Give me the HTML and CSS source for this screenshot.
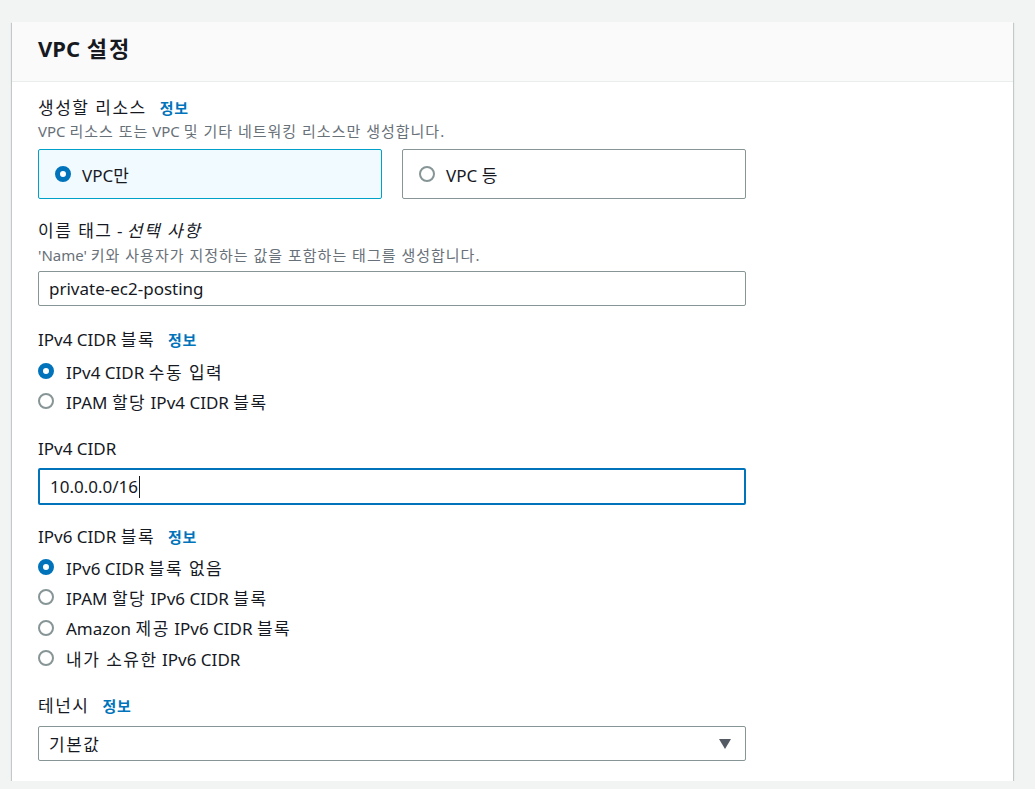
FILE: index.html
```html
<!DOCTYPE html>
<html lang="ko">
<head>
<meta charset="utf-8">
<title>VPC 설정</title>
<link rel="stylesheet" href="styles.css">
</head>
<body>
<div class="card">
  <div class="card-header">
    <h2 class="title">VPC <span class="k">설정</span></h2>
  </div>
  <div class="card-body">
    <div class="field field-resource">
      <div class="label"><span class="k">생성할 리소스</span><a class="info">정보</a></div>
      <div class="desc">VPC <span class="k">리소스 또는</span> VPC <span class="k">및 기타 네트워킹 리소스만 생성합니다</span>.</div>
      <div class="tiles">
        <div class="tile tile-selected"><span class="radio radio-on"></span><span class="tile-text">VPC<span class="k">만</span></span></div>
        <div class="tile"><span class="radio"></span><span class="tile-text">VPC <span class="k">등</span></span></div>
      </div>
    </div>

    <div class="field field-name">
      <div class="label"><span class="k">이름 태그</span> - <i class="k">선택 사항</i></div>
      <div class="desc">'Name' <span class="k">키와 사용자가 지정하는 값을 포함하는 태그를 생성합니다</span>.</div>
      <div class="input">private-ec2-posting</div>
    </div>

    <div class="field field-v4block">
      <div class="label">IPv4 CIDR <span class="k">블록</span><a class="info">정보</a></div>
      <div class="radios">
        <div class="radio-row"><span class="radio radio-on"></span><span>IPv4 CIDR <span class="k">수동 입력</span></span></div>
        <div class="radio-row"><span class="radio"></span><span>IPAM <span class="k">할당</span> IPv4 CIDR <span class="k">블록</span></span></div>
      </div>
    </div>

    <div class="field field-v4cidr">
      <div class="label">IPv4 CIDR</div>
      <div class="input input-focus">10.0.0.0/16<span class="caret"></span></div>
    </div>

    <div class="field field-v6block">
      <div class="label">IPv6 CIDR <span class="k">블록</span><a class="info">정보</a></div>
      <div class="radios">
        <div class="radio-row"><span class="radio radio-on"></span><span>IPv6 CIDR <span class="k">블록 없음</span></span></div>
        <div class="radio-row"><span class="radio"></span><span>IPAM <span class="k">할당</span> IPv6 CIDR <span class="k">블록</span></span></div>
        <div class="radio-row"><span class="radio"></span><span>Amazon <span class="k">제공</span> IPv6 CIDR <span class="k">블록</span></span></div>
        <div class="radio-row"><span class="radio"></span><span><span class="k">내가 소유한</span> IPv6 CIDR</span></div>
      </div>
    </div>

    <div class="field field-tenancy">
      <div class="label"><span class="k">테넌시</span><a class="info">정보</a></div>
      <div class="input select"><span class="k">기본값</span>
        <svg class="select-caret" width="12" height="10" viewBox="0 0 12 10"><path d="M0 0 H12 L6 10 Z" fill="#545b64"/></svg>
      </div>
    </div>
  </div>
</div>
</body>
</html>
```

FILE: styles.css
```css
* { box-sizing: border-box; }

html, body {
  margin: 0;
  padding: 0;
}

body {
  background: #f2f3f3;
  font-family: "Noto Sans", "Noto Sans CJK KR", sans-serif;
  color: #16191f;
  font-size: 17px;
  padding-top: 22px;
  padding-left: 12px;
}

.k {
  letter-spacing: 1.5px;
}

.card {
  width: 1001px;
  background: #ffffff;
  box-shadow: 0 1px 1px 0 rgba(0, 28, 36, 0.3), 1px 1px 1px 0 rgba(0, 28, 36, 0.15), -1px 1px 1px 0 rgba(0, 28, 36, 0.15);
}

.card-header {
  height: 60px;
  background: #fafafa;
  border-bottom: 1px solid #eaeded;
  padding: 11px 26px 0;
}

.title {
  margin: 0;
  font-size: 22px;
  font-weight: 700;
  line-height: 30px;
  color: #16191f;
  word-spacing: 1px;
}

.title .k {
  letter-spacing: 2px;
}

.card-body {
  padding: 14px 26px 20px;
}

.field {
  width: 708px;
}

.label {
  font-size: 17px;
  line-height: 24px;
  color: #16191f;
}

.label i {
  font-style: italic;
}

.info {
  color: #0073bb;
  font-size: 15px;
  font-weight: 700;
  margin-left: 13px;
  letter-spacing: 0.7px;
}

.desc {
  font-size: 15px;
  line-height: 20px;
  color: #687078;
  margin-top: 1px;
}

.desc .k {
  letter-spacing: 1px;
}

.tiles {
  display: flex;
  gap: 20px;
  margin-top: 8px;
}

.tile {
  flex: 1;
  height: 50px;
  border: 1px solid #879596;
  border-radius: 2px;
  display: flex;
  align-items: center;
  padding-left: 16px;
  gap: 11px;
  font-size: 17px;
}

.tile-selected {
  background: #f1faff;
  border-color: #00a1c9;
}

.radio {
  display: inline-block;
  width: 16px;
  height: 16px;
  border-radius: 50%;
  border: 2px solid #879596;
  background: #fff;
  flex: none;
}

.radio-on {
  border: 5px solid #0073bb;
}

.field-name { margin-top: 20px; }

.field-name .desc { margin-top: 2px; }

.input {
  margin-top: 6px;
  height: 35px;
  border: 1px solid #879596;
  border-radius: 2px;
  display: flex;
  align-items: center;
  padding-left: 10px;
  font-size: 17px;
  color: #16191f;
}

.input-focus {
  border: 2px solid #0073bb;
  height: 37px;
  margin-top: 7px;
}

.caret {
  display: inline-block;
  width: 1px;
  height: 22px;
  background: #16191f;
  margin-left: 1px;
}

.field-v4block { margin-top: 22px; }

.radios {
  margin-top: 4px;
}

.field-v6block .radios {
  margin-top: 3px;
}

.radio-row {
  display: flex;
  align-items: center;
  gap: 12px;
  height: 30px;
  font-size: 17px;
}

.field-v6block .radio-row { height: 30.3px; }

.field-v4cidr { margin-top: 21px; }

.field-v6block { margin-top: 20px; }

.field-tenancy { margin-top: 21px; }

.select {
  justify-content: space-between;
  padding-right: 14px;
  margin-top: 8px;
}

.select-caret {
  display: block;
}
```
